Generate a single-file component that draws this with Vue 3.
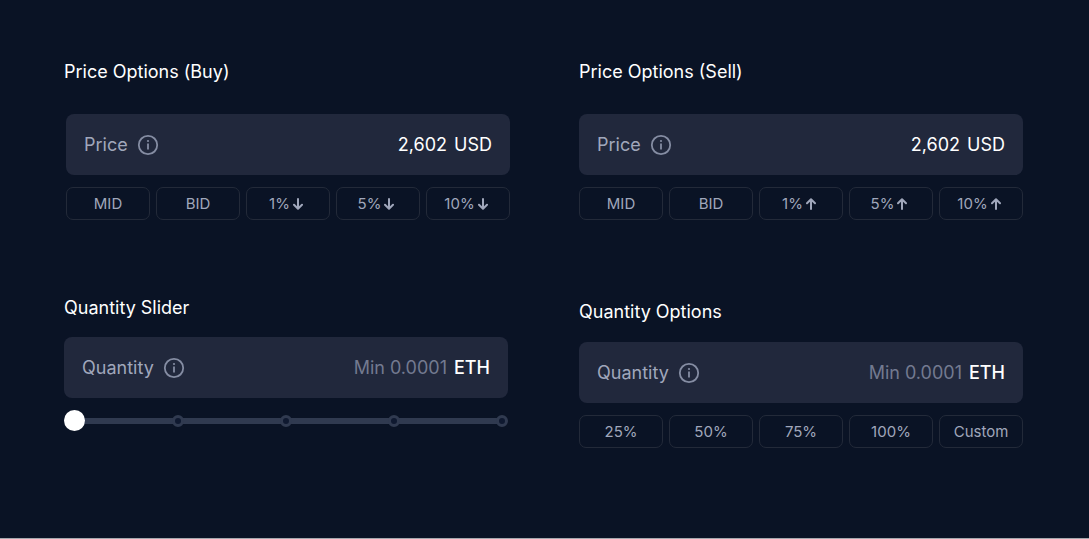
<script setup>
import { ref } from 'vue'

const buyPrice = ref('2,602')
const sellPrice = ref('2,602')
const sliderQuantity = ref('')
const optionQuantity = ref('')
const sliderValue = ref(0)

const priceOptions = [
  { text: 'MID' },
  { text: 'BID' },
  { text: '1%', arrow: true },
  { text: '5%', arrow: true },
  { text: '10%', arrow: true },
]
const quantityOptions = ['25%', '50%', '75%', '100%', 'Custom']
</script>

<template>
  <main class="board">
    <section class="panel panel-buy">
      <h2>Price Options (Buy)</h2>
      <div class="body">
        <div class="field">
          <label for="buy-price">Price</label>
          <svg class="info" viewBox="0 0 22 22" aria-hidden="true">
            <circle cx="11" cy="11" r="9.2" />
            <path d="M11 9.6v5.8" />
            <circle class="dot" cx="11" cy="7" r="1.1" />
          </svg>
          <input id="buy-price" v-model="buyPrice" type="text" />
          <span class="unit">USD</span>
        </div>
        <div class="options">
          <button v-for="o in priceOptions" :key="o.text" type="button">
            {{ o.text }}
            <svg v-if="o.arrow" class="arrow" viewBox="0 0 14 12" aria-label="down">
              <path d="M5 1v9.6M1 6.8l4 4 4-4" />
            </svg>
          </button>
        </div>
      </div>
    </section>

    <section class="panel">
      <h2>Price Options (Sell)</h2>
      <div class="body">
        <div class="field">
          <label for="sell-price">Price</label>
          <svg class="info" viewBox="0 0 22 22" aria-hidden="true">
            <circle cx="11" cy="11" r="9.2" />
            <path d="M11 9.6v5.8" />
            <circle class="dot" cx="11" cy="7" r="1.1" />
          </svg>
          <input id="sell-price" v-model="sellPrice" type="text" />
          <span class="unit">USD</span>
        </div>
        <div class="options">
          <button v-for="o in priceOptions" :key="o.text" type="button">
            {{ o.text }}
            <svg v-if="o.arrow" class="arrow" viewBox="0 0 14 12" aria-label="up">
              <path d="M5 11V1.4M1 5.2l4-4 4 4" />
            </svg>
          </button>
        </div>
      </div>
    </section>

    <section class="panel panel-slider">
      <h2>Quantity Slider</h2>
      <div class="body">
        <div class="field">
          <label for="slider-quantity">Quantity</label>
          <svg class="info" viewBox="0 0 22 22" aria-hidden="true">
            <circle cx="11" cy="11" r="9.2" />
            <path d="M11 9.6v5.8" />
            <circle class="dot" cx="11" cy="7" r="1.1" />
          </svg>
          <input id="slider-quantity" v-model="sliderQuantity" type="text" placeholder="Min 0.0001" />
          <span class="unit strong">ETH</span>
        </div>
        <div class="slider">
          <div class="track"></div>
          <div class="stops">
            <span v-for="n in 5" :key="n"></span>
          </div>
          <input v-model="sliderValue" type="range" min="0" max="100" aria-label="Quantity percentage" />
        </div>
      </div>
    </section>

    <section class="panel panel-quantity">
      <h2>Quantity Options</h2>
      <div class="body">
        <div class="field">
          <label for="option-quantity">Quantity</label>
          <svg class="info" viewBox="0 0 22 22" aria-hidden="true">
            <circle cx="11" cy="11" r="9.2" />
            <path d="M11 9.6v5.8" />
            <circle class="dot" cx="11" cy="7" r="1.1" />
          </svg>
          <input id="option-quantity" v-model="optionQuantity" type="text" placeholder="Min 0.0001" />
          <span class="unit strong">ETH</span>
        </div>
        <div class="options">
          <button v-for="o in quantityOptions" :key="o" type="button">{{ o }}</button>
        </div>
      </div>
    </section>
  </main>
</template>

<style>
body {
  margin: 0;
  background: #0a1325;
}
</style>

<style scoped>
.board {
  box-sizing: border-box;
  min-height: 100vh;
  padding: 60px 66px 0 64px;
  display: grid;
  grid-template-columns: minmax(0, 446fr) minmax(0, 444fr);
  grid-template-rows: auto auto 1fr;
  column-gap: 69px;
  row-gap: 76px;
  background: #0a1325;
  border-bottom: 1px solid #a5a8ae;
  font-family: Inter, "Liberation Sans", sans-serif;
  color: #fff;
}
h2 {
  margin: 0;
  font-size: 18px;
  line-height: 24px;
  font-weight: 400;
}
.body {
  margin-top: 30px;
}
.panel-buy .body {
  padding-left: 2px;
}
.panel-slider .body {
  margin-top: 17px;
  padding-right: 2px;
}
.panel-quantity {
  padding-top: 4px;
}
.panel-quantity .body {
  margin-top: 18px;
}
.field {
  display: flex;
  align-items: center;
  height: 61px;
  box-sizing: border-box;
  padding: 0 18px;
  border-radius: 8px;
  background: #21283c;
  font-size: 18px;
  line-height: 24px;
}
.field label {
  color: #a0a7bb;
}
.info {
  flex: none;
  width: 22px;
  height: 22px;
  margin-left: 9px;
  fill: none;
  stroke: #858da3;
  stroke-width: 1.8;
}
.info .dot {
  fill: #858da3;
  stroke: none;
}
.field input {
  flex: 1;
  min-width: 0;
  padding: 0;
  border: 0;
  outline: 0;
  background: none;
  font: inherit;
  color: #fff;
  text-align: right;
}
.field input::placeholder {
  color: #737a90;
  opacity: 1;
}
.unit {
  margin-left: 7px;
}
.strong {
  font-weight: 500;
}
.options {
  display: grid;
  grid-template-columns: repeat(5, 1fr);
  gap: 6px;
  margin-top: 12px;
}
.options button {
  display: flex;
  align-items: center;
  justify-content: center;
  gap: 3px;
  height: 33px;
  padding: 0;
  border: 1px solid #232a39;
  border-radius: 7px;
  background: none;
  font: 15px/20px Inter, "Liberation Sans", sans-serif;
  color: #a0a7bb;
}
.arrow {
  width: 14px;
  height: 12px;
  fill: none;
  stroke: #a0a7bb;
  stroke-width: 2;
  stroke-linecap: round;
  stroke-linejoin: round;
}
.slider {
  display: grid;
  align-items: center;
  margin-top: 12px;
}
.slider > * {
  grid-area: 1 / 1;
}
.track {
  height: 6px;
  margin: 0 6px;
  background: #303a50;
}
.stops {
  display: flex;
  justify-content: space-between;
}
.stops span {
  box-sizing: border-box;
  width: 12px;
  height: 12px;
  border: 3px solid #303a50;
  border-radius: 50%;
  background: #0f1930;
}
.slider input {
  appearance: none;
  width: 100%;
  height: 21px;
  margin: 0;
  background: none;
}
.slider input::-webkit-slider-thumb {
  appearance: none;
  width: 21px;
  height: 21px;
  border: 0;
  border-radius: 50%;
  background: #fff;
}
</style>
